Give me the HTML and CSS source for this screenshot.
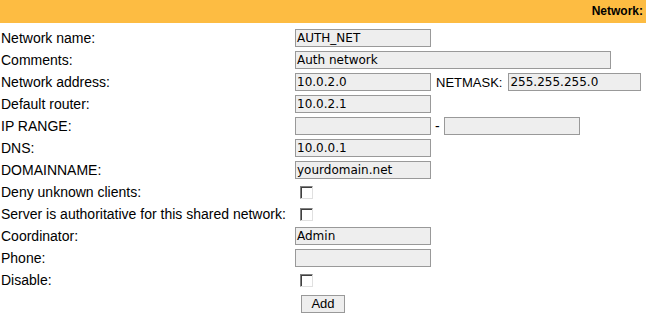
FILE: index.html
```html
<!DOCTYPE html>
<html>
<head>
<meta charset="utf-8">
<link rel="stylesheet" href="styles.css">
</head>
<body>
<div class="header">Network:</div>
<div class="form">
  <div class="label">Network name:</div>
  <div class="field"><span class="input w136">AUTH_NET</span></div>

  <div class="label">Comments:</div>
  <div class="field"><span class="input w316">Auth network</span></div>

  <div class="label">Network address:</div>
  <div class="field"><span class="input w136">10.0.2.0</span><span class="inline-label">NETMASK:</span><span class="input w133">255.255.255.0</span></div>

  <div class="label">Default router:</div>
  <div class="field"><span class="input w136">10.0.2.1</span></div>

  <div class="label">IP RANGE:</div>
  <div class="field"><span class="input w136"></span><span class="dash">-</span><span class="input w136"></span></div>

  <div class="label">DNS:</div>
  <div class="field"><span class="input w136">10.0.0.1</span></div>

  <div class="label">DOMAINNAME:</div>
  <div class="field"><span class="input w136">yourdomain.net</span></div>

  <div class="label">Deny unknown clients:</div>
  <div class="field"><span class="checkbox"></span></div>

  <div class="label">Server is authoritative for this shared network:</div>
  <div class="field"><span class="checkbox"></span></div>

  <div class="label">Coordinator:</div>
  <div class="field"><span class="input w136">Admin</span></div>

  <div class="label">Phone:</div>
  <div class="field"><span class="input w136"></span></div>

  <div class="label">Disable:</div>
  <div class="field"><span class="checkbox"></span></div>

  <div class="label"></div>
  <div class="field"><span class="button">Add</span></div>
</div>
</body>
</html>
```
FILE: styles.css
```css
html, body {
  margin: 0;
  padding: 0;
  background: #ffffff;
}
body {
  font-family: "Liberation Sans", Arial, sans-serif;
  color: #000;
}
.header {
  height: 23px;
  background: #fdbc42;
  font-weight: bold;
  font-size: 12px;
  line-height: 23px;
  text-align: right;
  padding-right: 3px;
  box-sizing: border-box;
}
.form {
  display: grid;
  grid-template-columns: 295px 1fr;
  grid-auto-rows: 22px;
  margin-top: 4px;
}
.label {
  font-size: 14px;
  padding-left: 1px;
  display: flex;
  align-items: center;
  white-space: nowrap;
}
.field {
  display: flex;
  align-items: center;
}
.input {
  display: block;
  box-sizing: border-box;
  height: 18px;
  border: 1px solid #999;
  background: #eeeeee;
  font-family: "DejaVu Sans", Verdana, sans-serif;
  font-size: 12px;
  line-height: 16px;
  padding-left: 1px;
  white-space: nowrap;
  overflow: hidden;
}
.w136 { width: 136px; }
.w316 { width: 316px; }
.w133 { width: 133px; }
.inline-label {
  font-size: 13px;
  margin-left: 5px;
  margin-right: 6px;
}
.dash {
  font-size: 14px;
  margin-left: 4px;
  margin-right: 4px;
}
.checkbox {
  display: block;
  box-sizing: border-box;
  width: 13px;
  height: 13px;
  margin-left: 5px;
  background: #fff;
  border-top: 1px solid #808080;
  border-left: 1px solid #808080;
  border-right: 1px solid #e0e0e0;
  border-bottom: 1px solid #e0e0e0;
  box-shadow: inset 1px 1px 0 #404040;
}
.button {
  display: block;
  box-sizing: border-box;
  margin-left: 6px;
  margin-top: 4px;
  width: 44px;
  height: 18px;
  border: 1px solid #999;
  background: #eeeeee;
  font-size: 13px;
  line-height: 16px;
  text-align: center;
}
```
